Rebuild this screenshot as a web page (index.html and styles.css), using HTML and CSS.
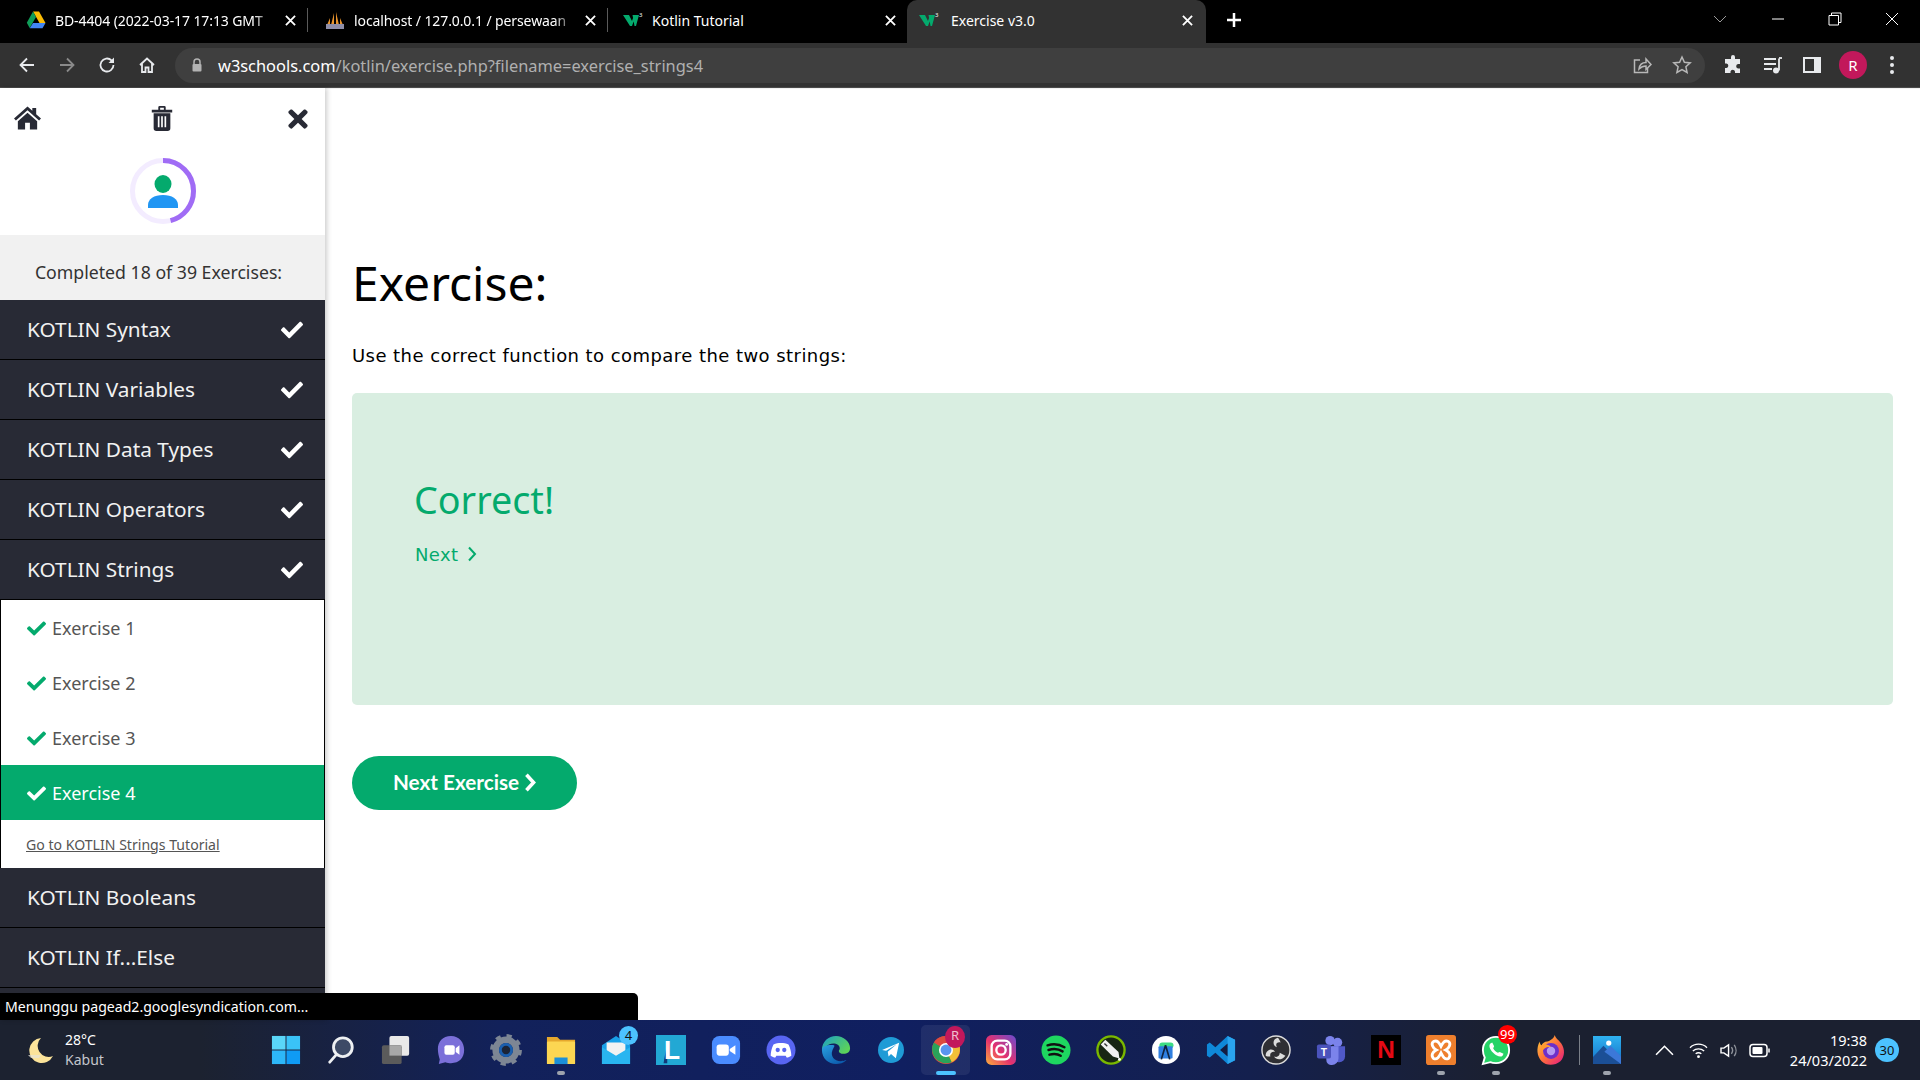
FILE: index.html
```html
<!DOCTYPE html>
<html lang="en">
<head>
<meta charset="utf-8">
<title>Exercise v3.0</title>
<link rel="stylesheet" href="styles.css">
</head>
<body>
<div class="screen">
  <header class="tabstrip">
    <div class="tab">
      <svg class="fav" viewBox="0 0 20 20"><path d="M7 1.500h6l6.500 11.500h-6z" fill="#fbbc04"/><path d="M7 1.500l3 5.500-6.300 11L.8 12.800z" fill="#0f9d58"/><path d="M7 13h12.500l-3 5.200H3.700z" fill="#4285f4"/></svg>
      <span class="tab-title">BD-4404 (2022-03-17 17:13 GMT</span>
      <svg class="tab-x" viewBox="0 0 12 12"><path d="M1 1l10 10M11 1L1 11"/></svg>
    </div>
    <i class="tab-sep"></i>
    <div class="tab tab-b">
      <svg class="fav" viewBox="0 0 20 20"><path d="M6 15L9 3v12zM11 15V2l3 13zM2 15l3-7v7zM15 8l3 7h-3z" fill="#e8932c"/><rect x="1" y="14" width="18" height="5" fill="#8e8ea8"/></svg>
      <span class="tab-title">localhost / 127.0.0.1 / persewaan</span>
      <svg class="tab-x" viewBox="0 0 12 12"><path d="M1 1l10 10M11 1L1 11"/></svg>
    </div>
    <i class="tab-sep"></i>
    <div class="tab tab-c">
      <svg class="fav" viewBox="0 0 20 20"><path d="M0 5h6l3 6 2-6h2l-4 11H7zM9.500 5H16l-3 11h-1.500z" fill="#04aa6d"/><text x="16" y="7" class="fav-sup">3</text></svg>
      <span class="tab-title">Kotlin Tutorial</span>
      <svg class="tab-x" viewBox="0 0 12 12"><path d="M1 1l10 10M11 1L1 11"/></svg>
    </div>
    <div class="tab tab-active">
      <svg class="fav" viewBox="0 0 20 20"><path d="M0 5h6l3 6 2-6h2l-4 11H7zM9.500 5H16l-3 11h-1.500z" fill="#04aa6d"/><text x="16" y="7" class="fav-sup">3</text></svg>
      <span class="tab-title">Exercise v3.0</span>
      <svg class="tab-x" viewBox="0 0 12 12"><path d="M1 1l10 10M11 1L1 11"/></svg>
    </div>
    <svg class="tab-new" viewBox="0 0 16 16"><path d="M8 1v14M1 8h14"/></svg>
    <div class="win-controls">
      <svg class="wc wc-chev" viewBox="0 0 14 8"><path d="M1 1l6 6 6-6"/></svg>
      <svg class="wc" viewBox="0 0 14 14"><path d="M1 7h12"/></svg>
      <svg class="wc" viewBox="0 0 14 14"><path d="M1 3.500h9.500V13H1zM3.500 3.500V1H13v9.500h-2.500"/></svg>
      <svg class="wc" viewBox="0 0 14 14"><path d="M1 1l12 12M13 1L1 13"/></svg>
    </div>
  </header>

  <nav class="toolbar">
    <svg class="tb-ic" viewBox="0 0 20 20"><path d="M17 10H4M10 3.500L3.500 10l6.500 6.500"/></svg>
    <svg class="tb-ic tb-dim" viewBox="0 0 20 20"><path d="M3 10h13M10 3.500l6.500 6.500-6.500 6.500"/></svg>
    <svg class="tb-ic" viewBox="0 0 20 20"><path d="M16.500 10a6.500 6.500 0 1 1-2-4.700L16.500 7"/><path class="tb-fill" d="M17 2.500V8h-5.500z"/></svg>
    <svg class="tb-ic" viewBox="0 0 20 20"><path d="M3 10l7-6.500 7 6.500M5 8.500V17h3.500v-4.500h3V17H15V8.500"/></svg>
    <div class="omnibox">
      <svg class="lock" viewBox="0 0 12 14"><path d="M3 6V4a3 3 0 0 1 6 0v2" class="lock-shackle"/><rect x="1.500" y="6" width="9" height="7.500" rx="1" fill="#b3b3b3"/></svg>
      <span class="url"><b>w3schools.com</b>/kotlin/exercise.php?filename=exercise_strings4</span>
      <svg class="omni-ic" viewBox="0 0 20 20"><path d="M8 5H2.500v12.500h13V13"/><path d="M7 14c.5-4 3-6.500 7-6.500V4l5 5.500-5 5V11c-3 0-5 1-7 3z"/></svg>
      <svg class="omni-ic omni-last" viewBox="0 0 20 20"><path d="M10 2l2.400 5.300 5.800.6-4.300 3.900 1.200 5.700L10 14.600l-5.100 2.900 1.200-5.700L1.800 7.900l5.800-.6z"/></svg>
    </div>
    <svg class="tb-solid" viewBox="0 0 20 20"><path d="M8 2a2 2 0 0 1 4 0v2h5v5h-2a2.300 2.300 0 0 0 0 4.500h2V18h-5v-1.500a2.300 2.300 0 0 0-4.500 0V18H2v-5h1.500a2.300 2.300 0 0 0 0-4.500H2V4h6z" fill="#e8eaed"/></svg>
    <svg class="tb-ic tb-media" viewBox="0 0 20 20"><path d="M1 4h12M1 9h12M1 14h8"/><path d="M16 3.500v12"/><path d="M16 3h3"/><circle class="tb-fill" cx="13" cy="15.500" r="3"/></svg>
    <svg class="tb-solid" viewBox="0 0 20 20"><rect x="1" y="2" width="18" height="16" fill="#e8eaed"/><rect x="3" y="4" width="9" height="12" fill="#323232"/></svg>
    <span class="profile">R</span>
    <svg class="tb-solid tb-dots" viewBox="0 0 6 20"><circle cx="3" cy="3" r="2" fill="#e8eaed"/><circle cx="3" cy="10" r="2" fill="#e8eaed"/><circle cx="3" cy="17" r="2" fill="#e8eaed"/></svg>
  </nav>

  <div class="viewport">
    <aside class="sidebar">
      <div class="side-tools">
        <svg class="tool" viewBox="0 0 28 26"><path d="M14 1L0 13.500l2 2L14 5l12 10.500 2-2-5-4.500V2.500h-4V5.500z" fill="#282a35"/><path d="M14 7.500L4 16.300V25h7.500v-7h5v7H24v-8.700z" fill="#282a35"/></svg>
        <svg class="tool tool-trash" viewBox="0 0 24 28"><path d="M1 5h22v3H1zM8 5V2.500A1.500 1.500 0 0 1 9.500 1h5A1.500 1.500 0 0 1 16 2.500V5h-2V3h-4v2z" fill="#282a35"/><path d="M3 9h18v16a3 3 0 0 1-3 3H6a3 3 0 0 1-3-3zM7.500 12v12h1.800V12zM11.100 12v12h1.800V12zM14.700 12v12h1.800V12z" fill="#282a35" fill-rule="evenodd"/></svg>
        <svg class="tool tool-x" viewBox="0 0 352 512"><path d="M242.720 256l100.070-100.070c12.280-12.280 12.280-32.190 0-44.480l-22.240-22.240c-12.280-12.280-32.190-12.280-44.480 0L176 189.280 75.930 89.210c-12.280-12.280-32.190-12.280-44.480 0L9.210 111.450c-12.280 12.280-12.280 32.190 0 44.480L109.280 256 9.210 356.070c-12.280 12.280-12.280 32.190 0 44.480l22.240 22.240c12.280 12.280 32.200 12.280 44.480 0L176 322.720l100.070 100.070c12.280 12.280 32.200 12.280 44.480 0l22.240-22.240c12.280-12.280 12.280-32.190 0-44.480L242.720 256z" fill="#282a35"/></svg>
      </div>
      <div class="avatar-wrap">
        <svg class="avatar" viewBox="0 0 66 66">
          <circle cx="33" cy="33" r="30.500" fill="none" stroke="#f3ecff" stroke-width="5"/>
          <circle cx="33" cy="33" r="30.500" fill="none" stroke="#a06cf5" stroke-width="5" pathLength="100" stroke-dasharray="46 54" transform="rotate(-90 33 33)"/>
          <ellipse cx="33" cy="26" rx="8.500" ry="9" fill="#04aa6d"/>
          <path d="M18 50v-3c0-6 6-10 15-10s15 4 15 10v3z" fill="#2196f3"/>
        </svg>
      </div>
      <p class="completed">Completed 18 of 39 Exercises:</p>
      <ul class="menu">
        <li class="menu-item"><span>KOTLIN Syntax</span><svg class="check" viewBox="0 0 512 512"><use href="#fa-check"/></svg></li>
        <li class="menu-item"><span>KOTLIN Variables</span><svg class="check" viewBox="0 0 512 512"><use href="#fa-check"/></svg></li>
        <li class="menu-item"><span>KOTLIN Data Types</span><svg class="check" viewBox="0 0 512 512"><use href="#fa-check"/></svg></li>
        <li class="menu-item"><span>KOTLIN Operators</span><svg class="check" viewBox="0 0 512 512"><use href="#fa-check"/></svg></li>
        <li class="menu-item menu-open"><span>KOTLIN Strings</span><svg class="check" viewBox="0 0 512 512"><use href="#fa-check"/></svg></li>
        <li class="submenu">
          <div class="sub-row"><svg class="sub-check" viewBox="0 0 512 512"><use href="#fa-check"/></svg>Exercise 1</div>
          <div class="sub-row"><svg class="sub-check" viewBox="0 0 512 512"><use href="#fa-check"/></svg>Exercise 2</div>
          <div class="sub-row"><svg class="sub-check" viewBox="0 0 512 512"><use href="#fa-check"/></svg>Exercise 3</div>
          <div class="sub-row sub-active"><svg class="sub-check" viewBox="0 0 512 512"><use href="#fa-check"/></svg>Exercise 4</div>
          <a class="sub-link" href="#">Go to KOTLIN Strings Tutorial</a>
        </li>
        <li class="menu-item"><span>KOTLIN Booleans</span></li>
        <li class="menu-item"><span>KOTLIN If...Else</span></li>
      </ul>
    </aside>
    <main class="content">
      <h1 class="title">Exercise:</h1>
      <p class="desc">Use the correct function to compare the two strings:</p>
      <section class="result">
        <h2 class="correct">Correct!</h2>
        <a class="next-link" href="#">Next <svg class="chev" viewBox="0 0 10 16"><path d="M2 1.500L8 8l-6 6.500"/></svg></a>
      </section>
      <a class="next-btn" href="#">Next Exercise <svg class="chev-b" viewBox="0 0 10 16"><path d="M2 1.500L8 8l-6 6.500"/></svg></a>
    </main>
    <div class="status">Menunggu pagead2.googlesyndication.com...</div>
  </div>

  <footer class="taskbar">
    <div class="weather">
      <svg class="moon" viewBox="0 0 28 28"><path d="M14 2A12.500 12.500 0 1 0 26 20 11 11 0 0 1 14 2z" fill="#fbe39a"/><path d="M1 19h13l-2 3H4z" fill="#e8e4d4" opacity=".75"/></svg>
      <div class="weather-text"><span>28°C</span><span class="dim">Kabut</span></div>
    </div>
    <div class="task-icons">
      <div class="cell"><svg viewBox="0 0 32 32"><rect x="1" y="1" width="14.500" height="14.500" fill="#5ad6f8"/><rect x="16.500" y="1" width="14.500" height="14.500" fill="#3ac3f8"/><rect x="1" y="16.500" width="14.500" height="14.500" fill="#2db7f8"/><rect x="16.500" y="16.500" width="14.500" height="14.500" fill="#0f9bf5"/></svg></div>
      <div class="cell"><svg viewBox="0 0 32 32"><circle cx="18" cy="13" r="10" fill="#3d4a66" stroke="#eef0f2" stroke-width="3"/><path d="M11 21l-7 8" stroke="#eef0f2" stroke-width="3" stroke-linecap="round"/></svg></div>
      <div class="cell"><svg viewBox="0 0 32 32"><rect x="9" y="1" width="21" height="21" rx="2" fill="#e9e9e9"/><rect x="1" y="11" width="21" height="20" rx="2" fill="#5b5b5b"/><rect x="9" y="11" width="13" height="11" fill="#a8a8a8"/></svg></div>
      <div class="cell"><svg viewBox="0 0 32 32"><path d="M16 1C7 1 2 7 2 15c0 4 1 8 2 11l-1 5 7-2c2 1 4 1 6 1 9 0 14-6 14-14S25 1 16 1z" fill="#7b70d9"/><rect x="9" y="11" width="11" height="10" rx="2" fill="#fff"/><path d="M21 14l4-3v10l-4-3z" fill="#fff"/></svg></div>
      <div class="cell"><svg viewBox="0 0 32 32"><circle cx="16" cy="16" r="11" fill="none" stroke="#7d8694" stroke-width="7"/><circle cx="16" cy="16" r="15" fill="none" stroke="#7d8694" stroke-width="4" stroke-dasharray="5.500 6.300"/><circle cx="16" cy="16" r="7.500" fill="#1b5fae"/><circle cx="16" cy="16" r="4.500" fill="#1c2436"/></svg></div>
      <div class="cell"><svg viewBox="0 0 32 32"><path d="M1 2h11l3 3h16v26H1z" fill="#e6a82d"/><rect x="1" y="7" width="30" height="24" rx="1" fill="#fcd652"/><rect x="9" y="24" width="14" height="7" fill="#1b8fd8"/></svg><i class="pin"></i></div>
      <div class="cell"><svg viewBox="0 0 32 32"><path d="M1 11L16 1l15 10v20H1z" fill="#18a0e8"/><path d="M6 8h20v9l-10 6-10-6z" fill="#f2f2f2"/><path d="M1 31V13l15 9 15-9v18z" fill="#29b5f0"/></svg><span class="count count-blue">4</span></div>
      <div class="cell"><svg viewBox="0 0 32 32"><rect width="32" height="32" fill="#22a8d4"/><path d="M8 30l4-22v22z" fill="#123a78"/><text x="17" y="26" class="ic-l">L</text></svg></div>
      <div class="cell"><svg viewBox="0 0 32 32"><rect x="1" y="1" width="30" height="30" rx="8" fill="#4a8cff"/><rect x="6" y="10" width="13" height="12" rx="3" fill="#fff"/><path d="M20 15l6-4v10l-6-4z" fill="#fff"/></svg></div>
      <div class="cell"><svg viewBox="0 0 32 32"><circle cx="16" cy="16" r="15.500" fill="#5865f2"/><path d="M8 10c5-2 11-2 16 0 2 4 3 8 3 12-2 1-3 2-5 2l-1-2H11l-1 2c-2 0-3-1-5-2 0-4 1-8 3-12z" fill="#fff"/><circle cx="12.500" cy="16" r="2.300" fill="#5865f2"/><circle cx="19.500" cy="16" r="2.300" fill="#5865f2"/></svg></div>
      <div class="cell"><svg viewBox="0 0 32 32"><defs><linearGradient id="edgeA" x1="0" y1="0" x2="1" y2=".6"><stop offset="0" stop-color="#1a9fc8"/><stop offset="1" stop-color="#5cd25a"/></linearGradient><linearGradient id="edgeB" x1="0" y1="0" x2=".7" y2="1"><stop offset="0" stop-color="#2aa0e0"/><stop offset="1" stop-color="#0c5cae"/></linearGradient></defs><path d="M1 16C1 7 8 1 16 1c8 0 15 6 15 13 0 4-3 6-7 6-3 0-5-1-5-3 0-1 1-1 1-3 0-3-3-5-7-5-6 0-10 5-10 9z" fill="url(#edgeA)"/><path d="M1 16c0 9 7 15 15 15 4 0 8-1 11-4 0-.5-.5-.5-1 0-1 .5-3 1-5 1-7 0-11-6-9-11 1-3 3-5 2-6-6-1-13 1-13 5z" fill="url(#edgeB)"/></svg></div>
      <div class="cell"><svg class="ic-small" viewBox="0 0 32 32"><circle cx="16" cy="16" r="16" fill="#1f9bd6"/><path d="M5 16l21-9-4 19-6-5-3 3-1-6 11-9-13 8z" fill="#fff"/></svg></div>
      <div class="cell cell-active"><svg viewBox="0 0 32 32"><circle cx="16" cy="16" r="15" fill="#dd4b3e"/><path d="M16 16L29 8a15 15 0 0 1-7 21z" fill="#f2c037"/><path d="M16 16l6 13A15 15 0 0 1 3 8z" fill="#2aa35a"/><path d="M3 8a15 15 0 0 1 13-7c6 0 10 3 13 7H16z" fill="#dd4b3e"/><circle cx="16" cy="16" r="7.500" fill="#fff"/><circle cx="16" cy="16" r="5.800" fill="#5a95ee"/></svg><span class="count count-r">R</span><i class="pin pin-active"></i></div>
      <div class="cell"><svg viewBox="0 0 32 32"><defs><linearGradient id="igA" x1="0" y1="1" x2="1" y2="0"><stop offset="0" stop-color="#fbb03b"/><stop offset=".45" stop-color="#e6316d"/><stop offset="1" stop-color="#6a4cd0"/></linearGradient></defs><rect width="32" height="32" rx="6" fill="url(#igA)"/><rect x="6" y="6" width="20" height="20" rx="6" fill="none" stroke="#fff" stroke-width="2.500"/><circle cx="16" cy="16" r="5" fill="none" stroke="#fff" stroke-width="2.500"/><circle cx="22" cy="10" r="1.500" fill="#fff"/></svg></div>
      <div class="cell"><svg viewBox="0 0 32 32"><circle cx="16" cy="16" r="15.500" fill="#1ed760"/><path d="M7 11c6-2 13-1 18 2M8 16c5-1.500 11-1 15 1.500M9 21c4-1 9-.7 12 1.200" fill="none" stroke="#111" stroke-width="2.600" stroke-linecap="round"/></svg></div>
      <div class="cell"><svg viewBox="0 0 32 32"><circle cx="16" cy="16" r="14.500" fill="#182614" stroke="#7ab800" stroke-width="2.500"/><path d="M10 5l14 13 1 7-7-2L5 10z" fill="#f0f0f0"/><path d="M9 9l3 3" stroke="#333" stroke-width="1.500"/><circle cx="25" cy="26" r="1.500" fill="#fff"/></svg></div>
      <div class="cell"><svg viewBox="0 0 32 32"><circle cx="16" cy="16" r="15" fill="#fff"/><rect x="9" y="8" width="15" height="6" rx="3" fill="#3ddc84"/><rect x="8" y="12" width="15" height="13" rx="1" fill="#2f7fe0"/><path d="M15.500 11L11 26M15.500 11L20 26" stroke="#10233f" stroke-width="1.800"/></svg></div>
      <div class="cell"><svg viewBox="0 0 32 32"><path d="M23 1l8 4v22l-8 4L10 19l-6 5-3-2V10l3-2 6 5z" fill="#0f88d8"/><path d="M23 1l8 4v22l-8 4z" fill="#2aa4ee"/><path d="M23 9l-8 7 8 7z" fill="#131c40"/></svg></div>
      <div class="cell"><svg viewBox="0 0 32 32"><circle cx="16" cy="16" r="15" fill="#2f2f33" stroke="#dcdcdc" stroke-width="1.500"/><path d="M18 3c-6 1-6 9-1 10-2-3 0-6 4-5-1-2-2-4-3-5zM5 22c0-6 7-9 10-4-3-1-6 1-5 5-2 0-4 0-5-1zM26 22c-3 5-10 5-12 1 3 1 6 0 6-4 2 1 4 2 6 3z" fill="#dcdcdc"/></svg></div>
      <div class="cell"><svg viewBox="0 0 32 32"><circle cx="23" cy="8" r="5" fill="#7b83eb"/><circle cx="15" cy="6" r="5" fill="#7b83eb"/><path d="M17 12h14v11a6 6 0 0 1-6 6h-1a7 7 0 0 1-7-7z" fill="#5059c9"/><path d="M11 12h13v13a7 7 0 0 1-7 7h-1a6 6 0 0 1-5-6z" fill="#7b83eb"/><rect x="1" y="10" width="15" height="15" rx="2" fill="#4b53bc"/><text x="8.500" y="22" class="ic-t">T</text></svg></div>
      <div class="cell"><svg viewBox="0 0 32 32"><rect width="32" height="32" fill="#000"/><text x="16" y="25" class="ic-n">N</text></svg></div>
      <div class="cell"><svg viewBox="0 0 32 32"><rect width="32" height="32" rx="3" fill="#ee7f2d"/><path d="M8 7c4-2 6 1 8 5 2-4 4-7 8-5 3 2 1 7-3 9 4 2 6 6 3 9-4 2-6-2-8-6-2 4-4 8-8 6-3-3-1-7 3-9-4-2-6-7-3-9z" fill="none" stroke="#fff" stroke-width="3"/></svg><i class="pin"></i></div>
      <div class="cell"><svg viewBox="0 0 32 32"><path d="M16 2C8 2 2 8 2 16c0 3 1 6 2 8l-2 7 8-2c2 1 4 1 6 1 8 0 14-6 14-14S24 2 16 2z" fill="#25d366" stroke="#fff" stroke-width="2"/><path d="M10 9c-2 2-1 6 3 10s8 5 10 3l1-2-4-2-2 1c-2-1-4-3-5-5l1-2-2-4z" fill="#fff"/></svg><span class="count count-red">99</span><i class="pin"></i></div>
      <div class="cell"><svg viewBox="0 0 32 32"><defs><linearGradient id="ffA" x1="0" y1="0" x2="1" y2="1"><stop offset="0" stop-color="#ffd23a"/><stop offset=".5" stop-color="#ff7139"/><stop offset="1" stop-color="#e31587"/></linearGradient></defs><path d="M20 0c1 4 4 5 7 9 4 6 4 14-1 19-6 5-15 5-20 0C1 23 0 14 4 7c0 2 1 4 2 4 1-2 3-4 6-4 3-1 7-3 8-7z" fill="url(#ffA)"/><circle cx="16" cy="17" r="8.500" fill="#6e2fc8"/><circle cx="16" cy="17" r="4.500" fill="#b59af0"/><path d="M5 12c4-3 9-2 11 1-4-1-8 1-9 4z" fill="#ff9a2e"/></svg></div>
      <i class="task-sep"></i>
      <div class="cell cell-photos"><svg class="ic-photos" viewBox="0 0 32 32"><defs><linearGradient id="phA" x1="0" y1="0" x2="0" y2="1"><stop offset="0" stop-color="#2fb2f0"/><stop offset="1" stop-color="#1570c8"/></linearGradient></defs><rect width="32" height="32" fill="url(#phA)"/><circle cx="18" cy="8" r="3" fill="#fff"/><path d="M0 24L12 11l20 21H0z" fill="#1b4f96"/><path d="M13 18l7-7 12 12v9z" fill="#3c78d8"/></svg><i class="pin"></i></div>
    </div>
    <div class="tray">
      <svg class="tray-ic" viewBox="0 0 18 10"><path d="M1 9l8-8 8 8"/></svg>
      <svg class="tray-ic tray-wifi" viewBox="0 0 20 18"><path d="M1 6c5-5 13-5 18 0M4 9.500c3.500-3 8.500-3 12 0M7 12.500c2-1.500 4-1.500 6 0"/><circle class="tray-dot" cx="10" cy="15.500" r="1.500"/></svg>
      <svg class="tray-ic" viewBox="0 0 20 18"><path d="M1 6.500h3L9 3v12l-5-3.500H1z"/><path class="tray-faint" d="M12 5.500c1.500 2 1.500 5 0 7M15 3c2.500 3.500 2.500 8.500 0 12"/></svg>
      <svg class="tray-ic tray-bat" viewBox="0 0 22 14"><rect x="1" y="1" width="17" height="12" rx="3"/><rect class="tray-dot" x="3.500" y="3.500" width="10" height="7" rx="1"/><path d="M20 5v4"/></svg>
    </div>
    <div class="clock"><span>19:38</span><span>24/03/2022</span></div>
    <span class="notif">30</span>
  </footer>
</div>
<svg class="defs"><defs><path id="fa-check" d="M173.898 439.404l-166.400-166.400c-9.997-9.997-9.997-26.206 0-36.204l36.203-36.204c9.997-9.998 26.207-9.998 36.204 0L192 312.690 432.095 72.596c9.997-9.997 26.207-9.997 36.204 0l36.203 36.204c9.997 9.997 9.997 26.206 0 36.204l-294.400 294.401c-9.998 9.997-26.207 9.997-36.204-.001z"/></defs></svg>
</body>
</html>
```
FILE: styles.css
```css
* { box-sizing: border-box; }
html, body { margin: 0; padding: 0; width: 1920px; height: 1080px; overflow: hidden; background: #fff; }
body { font-family: "Noto Sans", "Open Sans", sans-serif; }
ul { list-style: none; margin: 0; padding: 0; }
.defs { position: absolute; width: 0; height: 0; }
.screen { width: 1920px; height: 1080px; display: flex; flex-direction: column; overflow: hidden; }

/* tab strip */
.tabstrip { height: 43px; background: #000; display: flex; align-items: stretch; padding-left: 8px; flex: none; }
.tab { width: 299px; padding: 0 11px 3px 18px; display: flex; align-items: center; gap: 9px; color: #fff; font-size: 14px; }
.tab-b { padding-left: 17px; }
.tab-c { padding-left: 15px; }
.tab-active { width: 299px; background: #323232; border-radius: 10px 10px 0 0; padding-left: 12px; padding-right: 13px; gap: 13px; }
.tab-active .fav { margin-right: -1px; }
.fav { width: 20px; height: 20px; flex: none; }
.fav-sup { font-size: 6px; fill: #fff; font-family: "Noto Sans", sans-serif; }
.tab-title { flex: 1; min-width: 0; white-space: nowrap; letter-spacing: -.1px; -webkit-mask-image: linear-gradient(to right, #000 90%, transparent 100%); mask-image: linear-gradient(to right, #000 90%, transparent 100%); }
.tab-c .tab-title, .tab-active .tab-title { -webkit-mask-image: none; mask-image: none; letter-spacing: 0; }
.tab-x { width: 11px; height: 11px; flex: none; }
.tab-x path { stroke: #fff; stroke-width: 2; fill: none; }
.tab-sep { width: 1px; height: 24px; background: #5a5a5a; align-self: center; flex: none; margin-top: -3px; }
.tab-new { width: 16px; height: 16px; margin: -3px 0 0 20px; align-self: center; }
.tab-new path { stroke: #fff; stroke-width: 2.500; fill: none; }
.win-controls { margin-left: auto; display: flex; align-items: center; height: 38px; padding-right: 21px; gap: 43px; }
.wc { width: 14px; height: 14px; }
.wc path { stroke: #fff; stroke-width: 1; fill: none; }
.wc-chev { margin-right: 1px; }
.wc-chev path { stroke: #9a9a9a; }

/* toolbar */
.toolbar { height: 45px; background: #323232; border-bottom: 1px solid #4a4a4a; display: flex; align-items: center; flex: none; padding-left: 17px; }
.tb-ic { width: 20px; height: 20px; flex: none; margin-right: 20px; }
.tb-ic path { stroke: #e8eaed; stroke-width: 1.800; fill: none; }
.tb-ic .tb-fill, .tb-fill { fill: #e8eaed; stroke: none; }
.tb-dim path { stroke: #8a8a8a; }
.omnibox { width: 1530px; height: 35px; margin-left: -2px; background: #3f3f3f; border-radius: 18px; display: flex; align-items: center; padding-left: 16px; margin-right: 18px; flex: none; }
.lock { width: 12px; height: 14px; flex: none; }
.lock-shackle { stroke: #b3b3b3; stroke-width: 1.500; fill: none; }
.url { margin-left: 15px; flex: 1; font-size: 16.400px; color: #b0b0b0; white-space: nowrap; }
.url b { color: #fff; font-weight: 400; }
.omni-ic { width: 20px; height: 20px; flex: none; margin-right: 20px; }
.omni-last { margin-right: 13px; }
.omni-ic path { stroke: #b8b8b8; stroke-width: 1.500; fill: none; }
.tb-solid { width: 20px; height: 20px; flex: none; margin-right: 20px; }
.tb-media { margin-right: 19px; }
.tb-dots { width: 6px; margin: 0 0 0 22px; }
.profile { width: 28px; height: 28px; border-radius: 50%; background: #c2185b; color: #fff; font-size: 15px; display: flex; align-items: center; justify-content: center; flex: none; margin-left: -3px; }

/* page */
.viewport { flex: 1; min-height: 0; display: flex; position: relative; border-top: 1px solid #f1f1f1; }
.sidebar { width: 325px; flex: none; background: #282a35; box-shadow: 2px 0 5px rgba(0,0,0,.2); z-index: 1; margin-top: -1px; }
.side-tools { height: 57px; background: #fff; display: flex; align-items: center; justify-content: space-between; padding: 3px 15px 0 14px; }
.tool { width: 27px; height: 26px; flex: none; }
.tool-trash { margin-right: 5px; width: 24px; }
.tool-x { width: 22px; height: 28px; margin-right: 1px; margin-top: 2px; }
.avatar-wrap { height: 90px; background: #fff; display: flex; align-items: flex-start; justify-content: center; padding-top: 13px; }
.avatar { width: 66px; height: 66px; }
.completed { margin: 0; height: 65px; background: #f1f1f1; color: #333; font-size: 17.700px; display: flex; align-items: center; justify-content: center; padding: 8px 8px 0 0; }
.menu-item { height: 60px; display: flex; align-items: center; justify-content: space-between; padding: 0 22px 0 27px; color: #f1f1f1; font-size: 20.800px; border-bottom: 1px solid #000; }
.menu-item span { padding-bottom: 2px; }
.check { width: 22px; height: 22px; fill: #fff; flex: none; }
.submenu { background: #fff; border: 1px solid #000; border-top: 0; border-bottom: 0; height: 268px; display: flex; flex-direction: column; }
.sub-row { height: 55px; display: flex; align-items: center; padding: 1px 0 0 26px; color: #555; font-size: 18px; flex: none; }
.sub-check { width: 19px; height: 19px; fill: #04aa6d; margin-right: 6px; flex: none; }
.sub-active { background: #04aa6d; color: #fff; }
.sub-active .sub-check { fill: #fff; }
.sub-link { height: 48px; display: flex; align-items: center; padding-left: 25px; color: #555; font-size: 14.100px; text-decoration: underline; }

.content { flex: 1; padding: 0 27px; min-width: 0; }
.title { margin: 156px 0 0; font-size: 48px; line-height: 76px; font-weight: 400; color: #000; }
.desc { margin: 20px 0 0; font-family: "DejaVu Sans", sans-serif; font-size: 18px; letter-spacing: .44px; line-height: 30px; color: #000; }
.result { margin-top: 22px; height: 312px; background: #d9eee1; border-radius: 5px; padding: 79px 0 0 62px; }
.correct { margin: 0; font-size: 37.700px; line-height: 56px; font-weight: 400; color: #04aa6d; }
.next-link { display: flex; align-items: center; gap: 8px; margin-top: 11px; height: 30px; padding-left: 1px; font-family: "DejaVu Sans", sans-serif; font-size: 18px; letter-spacing: .4px; color: #04aa6d; text-decoration: none; }
.chev { width: 10px; height: 16px; }
.chev path { stroke: #04aa6d; stroke-width: 2; fill: none; }
.next-btn { display: inline-flex; align-items: center; justify-content: center; gap: 5px; margin-top: 51px; width: 225px; height: 54px; border-radius: 27px; background: #04aa6d; color: #fff; font-family: Lato, sans-serif; font-weight: 700; font-size: 20.700px; padding-bottom: 2px; text-decoration: none; }
.chev-b { width: 12px; height: 19px; }
.chev-b path { stroke: #fff; stroke-width: 3; fill: none; }
.status { position: absolute; left: 0; bottom: 0; width: 638px; height: 27px; background: #000; color: #fff; border-radius: 0 5px 0 0; font-size: 14.100px; line-height: 27px; padding-left: 5px; z-index: 2; }

/* taskbar */
.taskbar { height: 60px; flex: none; background: linear-gradient(to right, #1c2230 0, #1c2230 200px, #12215a 500px, #101f60 900px, #14204e 1250px, #1b2030 1500px, #1b2030 100%); display: flex; align-items: center; color: #fff; position: relative; }
.weather { width: 258px; flex: none; display: flex; align-items: center; padding-left: 27px; gap: 10px; }
.moon { width: 28px; height: 28px; flex: none; }
.weather-text { display: flex; flex-direction: column; font-size: 14px; line-height: 20px; }
.dim { color: #c4c6cc; }
.task-icons { display: flex; align-items: center; flex: none; }
.cell { width: 55px; height: 60px; display: flex; align-items: center; justify-content: center; position: relative; flex: none; }
.cell svg { width: 30px; height: 30px; overflow: visible; }
.cell .ic-small { width: 26px; height: 26px; }
.cell .ic-photos { width: 28px; height: 28px; }
.cell-photos { margin-left: -2px; }
.cell-active::before { content: ""; position: absolute; left: 3px; right: 3px; top: 5px; bottom: 5px; background: rgba(255,255,255,.07); border-radius: 5px; }
.cell-active svg { position: relative; }
.pin { position: absolute; left: 50%; bottom: 5px; width: 8px; height: 4px; margin-left: -4px; border-radius: 2px; background: #9ea3ad; }
.pin-active { width: 20px; margin-left: -10px; background: #4cc2ff; }
.count { position: absolute; top: 8px; right: 7px; min-width: 19px; height: 19px; border-radius: 50%; font-size: 13px; line-height: 19px; text-align: center; }
.count-blue { background: #4cc2ff; color: #111; top: 6px; right: 5px; }
.count-r { background: #c2185b; color: #f0c0d0; top: 6px; right: 8px; width: 20px; height: 22px; }
.count-red { background: #f00; color: #fff; top: 5px; right: 6px; }
.task-sep { width: 1px; height: 30px; background: #7a7f88; flex: none; margin: 0 1px 0 1px; }
.ic-l { font-family: "Liberation Sans", sans-serif; font-weight: 700; font-size: 28px; fill: #fff; text-anchor: middle; }
.ic-t { font-family: "Liberation Sans", sans-serif; font-weight: 700; font-size: 11px; fill: #fff; text-anchor: middle; }
.ic-n { font-family: "Liberation Sans", sans-serif; font-weight: 700; font-size: 26px; fill: #e50914; text-anchor: middle; }
.tray { display: flex; align-items: center; gap: 12px; margin-left: 21px; flex: none; }
.tray-wifi { margin-left: 3px; }
.tray-ic { width: 19px; height: 17px; flex: none; }
.tray-ic path, .tray-ic rect { stroke: #fff; stroke-width: 1.500; fill: none; }
.tray-ic .tray-dot { fill: #fff; stroke: none; }
.tray-ic .tray-faint { stroke: #8f939b; }
.tray-bat { width: 22px; margin-left: -2px; }
.clock { margin-left: auto; display: flex; flex-direction: column; align-items: flex-end; font-size: 14.500px; line-height: 20px; }
.notif { width: 24px; height: 24px; border-radius: 50%; background: #4cc2ff; color: #111; font-size: 13px; display: flex; align-items: center; justify-content: center; margin: 0 21px 0 8px; flex: none; }
```
